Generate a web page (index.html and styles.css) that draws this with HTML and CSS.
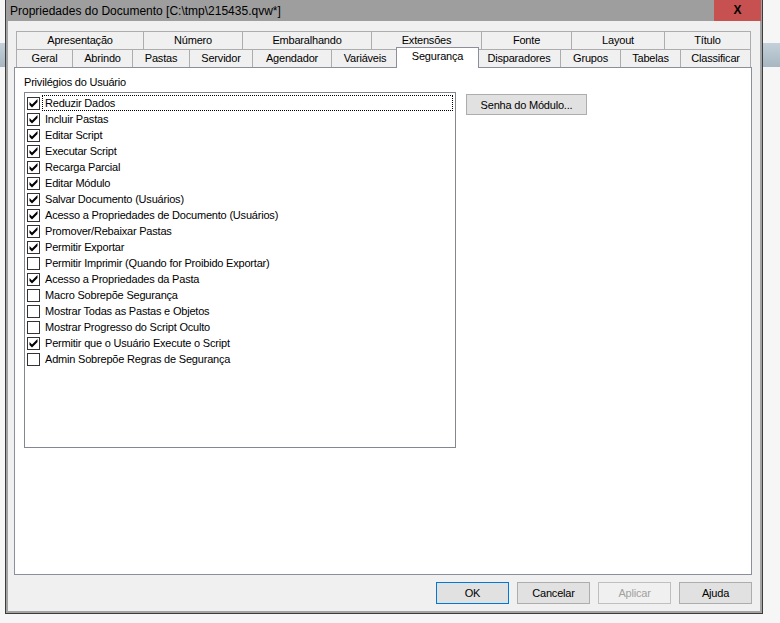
FILE: index.html
```html
<!DOCTYPE html>
<html lang="pt">
<head>
  <meta charset="UTF-8">
  <title>Propriedades do Documento</title>
  <link rel="stylesheet" href="styles.css">
</head>
<body>
  <div class="window">
    <div class="titlebar">
      <span class="title">Propriedades do Documento [C:\tmp\215435.qvw*]</span>
      <div class="close">X</div>
    </div>

    <div class="client">
      <div class="tabctl">
        <div class="tab-row row-top">
          <div class="tab">Apresentação</div>
          <div class="tab">Número</div>
          <div class="tab">Embaralhando</div>
          <div class="tab">Extensões</div>
          <div class="tab">Fonte</div>
          <div class="tab">Layout</div>
          <div class="tab">Título</div>
        </div>
        <div class="tab-row row-bottom">
          <div class="tab">Geral</div>
          <div class="tab">Abrindo</div>
          <div class="tab">Pastas</div>
          <div class="tab">Servidor</div>
          <div class="tab">Agendador</div>
          <div class="tab">Variáveis</div>
          <div class="tab active">Segurança</div>
          <div class="tab">Disparadores</div>
          <div class="tab">Grupos</div>
          <div class="tab">Tabelas</div>
          <div class="tab">Classificar</div>
        </div>

        <div class="panel">
          <div class="group-label">Privilégios do Usuário</div>
          <div class="panel-body">
            <div class="listbox" id="privs"></div>
            <button class="btn btn-senha">Senha do Módulo...</button>
          </div>
        </div>
      </div>

      <div class="actions">
        <button class="btn btn-default">OK</button>
        <button class="btn">Cancelar</button>
        <button class="btn" disabled>Aplicar</button>
        <button class="btn">Ajuda</button>
      </div>
    </div>
  </div>

  <script>
    // Lista de privilégios: [texto, marcado]
    var privilegios = [
      ['Reduzir Dados', true],
      ['Incluir Pastas', true],
      ['Editar Script', true],
      ['Executar Script', true],
      ['Recarga Parcial', true],
      ['Editar Módulo', true],
      ['Salvar Documento (Usuários)', true],
      ['Acesso a Propriedades de Documento (Usuários)', true],
      ['Promover/Rebaixar Pastas', true],
      ['Permitir Exportar', true],
      ['Permitir Imprimir (Quando for Proibido Exportar)', false],
      ['Acesso a Propriedades da Pasta', true],
      ['Macro Sobrepõe Segurança', false],
      ['Mostrar Todas as Pastas e Objetos', false],
      ['Mostrar Progresso do Script Oculto', false],
      ['Permitir que o Usuário Execute o Script', true],
      ['Admin Sobrepõe Regras de Segurança', false]
    ];

    var check = '<svg width="11" height="11" viewBox="0 0 11 11">' +
      '<path d="M1.5 4 L4 6.5 L9.5 1 L9.5 4 L4 9.5 L1.5 7 Z" fill="#000"/></svg>';

    var lista = document.getElementById('privs');
    lista.innerHTML = privilegios.map(function (p, i) {
      return '<div class="item">' +
        '<span class="checkbox">' + (p[1] ? check : '') + '</span>' +
        '<span class="item-label' + (i === 0 ? ' focused' : '') + '">' + p[0] + '</span>' +
        '</div>';
    }).join('');
  </script>
</body>
</html>
```

FILE: styles.css
```css
body {
  margin: 0;
  font-family: "Liberation Sans", Arial, sans-serif;
  font-size: 11px;
  color: #000;
  background-color: #f6f6f6;
  background-image: linear-gradient(to bottom, transparent 43px, #c4d1da 43px, #a7b6c1 67px, transparent 67px);
}

.window {
  box-sizing: border-box;
  width: 758px;
  height: 614px;
  margin-left: 5px;
  background-color: #a3a3a3;
  border: 1px solid #3c3c3c;
  border-top: none;
}

.titlebar {
  display: flex;
  align-items: center;
  justify-content: space-between;
  height: 21px;
  padding: 0 1px 0 4px;
  background-color: #9e9e9e;
}

.title {
  font-size: 12px;
  color: #000;
}

.close {
  width: 47px;
  height: 21px;
  line-height: 21px;
  text-align: center;
  background-color: #c75050;
  font-weight: bold;
  font-size: 12px;
}

.client {
  box-sizing: border-box;
  height: 590px;
  margin: 0 2px;
  padding: 10px 8px 0 6px;
  background-color: #f0f0f0;
  letter-spacing: -0.2px;
}

.tabctl {
  width: 738px;
}

.tab-row {
  display: grid;
  padding: 0 2px;
}

.row-top {
  grid-template-columns: 127px 99px 129px 110px 90px 93px 87px;
}

.row-bottom {
  grid-template-columns: 56px 60px 57px 63px 79px 67px 79px 83px 60px 60px 71px;
}

.tab {
  height: 18px;
  line-height: 17px;
  text-align: center;
  white-space: nowrap;
  box-sizing: border-box;
  border: 1px solid #adadad;
  border-bottom: none;
  border-right: none;
  background-color: #f0f0f0;
}

.tab:last-child {
  border-right: 1px solid #adadad;
}

.tab.active {
  position: relative;
  z-index: 1;
  height: 21px;
  line-height: 17px;
  margin: -2px -2px -1px -2px;
  background-color: #fff;
  border: 1px solid #8c8f99;
  border-bottom: none;
}

.panel {
  box-sizing: border-box;
  height: 508px;
  padding: 8px 0 0 9px;
  background-color: #fff;
  border: 1px solid #8c8f99;
}

.group-label {
  line-height: 13px;
}

.panel-body {
  display: flex;
  align-items: flex-start;
  margin-top: 3px;
}

.listbox {
  box-sizing: border-box;
  width: 432px;
  height: 356px;
  padding: 2px 2px 0 2px;
  border: 1px solid #828790;
  background-color: #fff;
}

.item {
  display: flex;
  align-items: center;
  height: 16px;
}

.checkbox {
  box-sizing: border-box;
  width: 13px;
  height: 13px;
  display: flex;
  align-items: center;
  justify-content: center;
  border: 1px solid #333;
  background-color: #fff;
}

.item-label {
  flex: 1;
  box-sizing: border-box;
  height: 16px;
  line-height: 14px;
  margin-left: 2px;
  padding-left: 2px;
  border: 1px dotted transparent;
}

.item-label.focused {
  border-color: #000;
}

.btn {
  box-sizing: border-box;
  height: 21px;
  padding: 0;
  font-family: inherit;
  font-size: 11px;
  letter-spacing: -0.2px;
  color: #000;
  background-color: #e1e1e1;
  border: 1px solid #adadad;
}

.btn-senha {
  width: 121px;
  margin: 2px 0 0 10px;
}

.btn-default {
  border-color: #0078d7;
}

.btn:disabled {
  color: #a0a0a0;
  background-color: #f0f0f0;
  border-color: #bfbfbf;
}

.actions {
  display: flex;
  justify-content: flex-end;
  gap: 8px;
  margin-top: 7px;
}

.actions .btn {
  width: 73px;
  height: 22px;
}
```
